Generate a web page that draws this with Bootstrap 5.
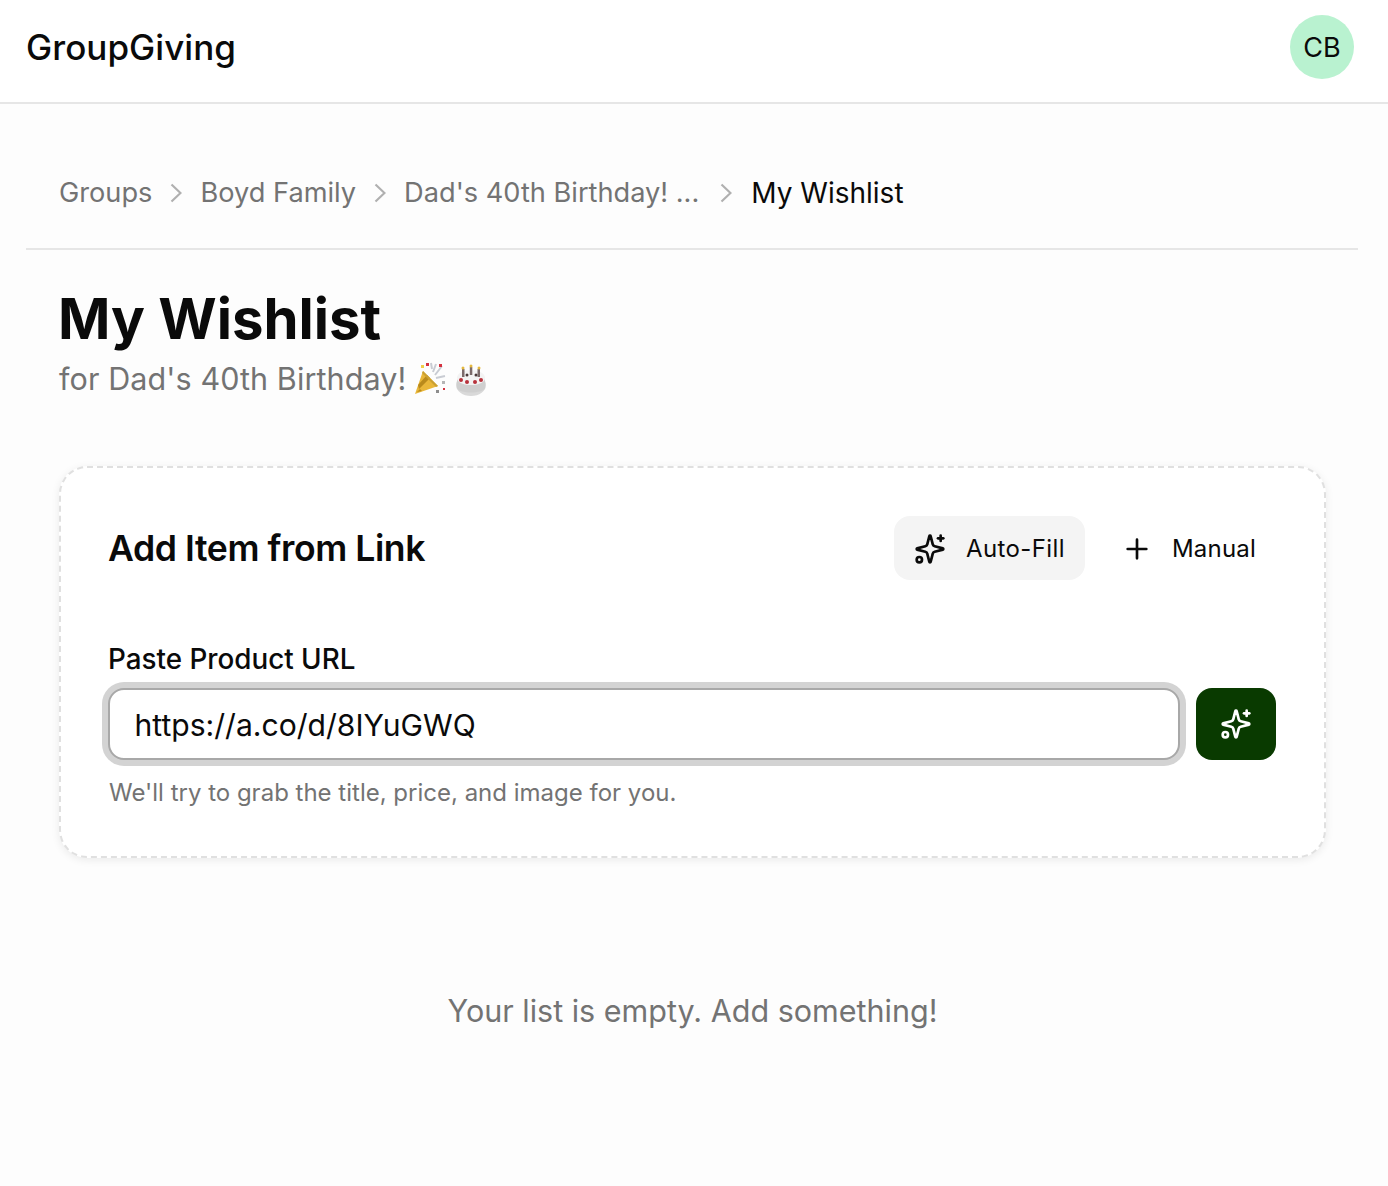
<!DOCTYPE html>
<html lang="en"><head><meta charset="utf-8"><title>GroupGiving</title>
<link href="https://cdn.jsdelivr.net/npm/bootstrap@5.3.0/dist/css/bootstrap.min.css" rel="stylesheet">
<style>
html,body{height:100%}
body{font-family:Inter,"Liberation Sans",sans-serif;background:#fdfdfd;color:#0a0a0a;-webkit-font-smoothing:antialiased}
.gg-top{height:104px;background:#fff;border-bottom:2px solid #e6e6e6;padding:0 34px 8px 26px}
.gg-logo{font-size:35px;font-weight:500;letter-spacing:.05px;line-height:1;color:#0a0a0a}
.gg-avatar{width:64px;height:64px;background:#b9f2d0;font-size:27px;line-height:1}
.gg-wrap{padding:0 30px 0 26px}
.gg-crumbs{height:146px;padding:69px 0 0 33px;border-bottom:2px solid #e6e6e6;font-size:27.2px;line-height:40px;color:#737373;gap:18px}
.gg-crumbs .gg-now{color:#0a0a0a;font-size:28px}
.gg-chev{width:12px;height:22px;margin-top:9px}
.gg-chev-last{margin-left:3px;margin-right:1px}
.gg-head{padding:37px 0 0 33px}
.gg-h1{font-size:56.3px;font-weight:700;line-height:64px;margin:0 0 0 -1px}
.gg-sub{font-size:30.5px;color:#737373;line-height:44px;margin:6px 0 0;letter-spacing:.1px}
.gg-emo{width:36px;height:36px;vertical-align:-7px}
.gg-emo1{margin-left:6px}
.gg-emo2{margin-left:5px}
.gg-panel{margin:65px 32px 0 33px;height:392px;border:2px dashed #e0e0e0;border-radius:28px;background:#fff;box-shadow:0 2px 8px rgba(0,0,0,.08);padding:48px 48px 0 48px}
.gg-h2{font-size:35.6px;font-weight:600;letter-spacing:-.42px;margin:0 0 0 -1px;padding-top:2px;line-height:62px}
.gg-btn{height:64px;border-radius:16px;border:0;background:transparent;color:#0a0a0a;font-size:24px;padding:2px 20px 0;gap:19px;letter-spacing:.2px}
.gg-btn-soft{background:#f4f4f4;gap:20px;letter-spacing:.4px}
.gg-spark{width:32px;height:32px;fill:none;stroke:currentColor;stroke-width:2;stroke-linecap:round;stroke-linejoin:round}
.gg-label{font-size:27.8px;font-weight:500;line-height:32px;margin:63px 0 13px -1px;display:block}
.gg-input{height:72px;border-radius:16px;border:2px solid #a8a8a8;box-shadow:0 0 0 6px #d3d3d3;background:#fff;font-size:30.1px;padding:2px 24px 0 24.500px;font-family:inherit;color:#0a0a0a;outline:0;margin-left:-1px}
.gg-go{width:80px;height:72px;border-radius:16px;background:#093a00;border:0;margin-left:16px;color:#fff}
.gg-hint{font-size:24px;color:#737373;line-height:32px;margin:17px 0 0}
.gg-empty{font-size:30.5px;color:#737373;text-align:center;margin:131px 0 0;line-height:44px;padding-left:1px}
</style></head><body>
<svg width="0" height="0" class="position-absolute"><defs>
<symbol id="spark" viewBox="0 0 24 24"><path d="M9.937 15.5A2 2 0 0 0 8.500 14.063l-6.135-1.582a.5.5 0 0 1 0-.962L8.500 9.936A2 2 0 0 0 9.937 8.500l1.582-6.135a.5.5 0 0 1 .963 0L14.063 8.500A2 2 0 0 0 15.500 9.937l6.135 1.581a.5.5 0 0 1 0 .964L15.500 14.063a2 2 0 0 0-1.437 1.437l-1.582 6.135a.5.5 0 0 1-.963 0z"/><path d="M20 2v4"/><path d="M22 4h-4"/><circle cx="4" cy="20" r="2"/></symbol>
</defs></svg>
<header class="gg-top d-flex align-items-center justify-content-between">
<div class="gg-logo">GroupGiving</div>
<div class="gg-avatar rounded-circle d-flex align-items-center justify-content-center">CB</div>
</header>
<div class="gg-wrap">
<nav class="gg-crumbs d-flex align-items-start" aria-label="breadcrumb">
<span>Groups</span>
<svg class="gg-chev" viewBox="0 0 12 22" fill="none" stroke="#b0b0b0" stroke-width="2.200"><path d="M1.500 2.500l9 8.500-9 8.500"/></svg>
<span>Boyd Family</span>
<svg class="gg-chev" viewBox="0 0 12 22" fill="none" stroke="#b0b0b0" stroke-width="2.200"><path d="M1.500 2.500l9 8.500-9 8.500"/></svg>
<span>Dad's 40th Birthday! ...</span>
<svg class="gg-chev gg-chev-last" viewBox="0 0 12 22" fill="none" stroke="#b0b0b0" stroke-width="2.200"><path d="M1.500 2.500l9 8.500-9 8.500"/></svg>
<span class="gg-now">My Wishlist</span>
</nav>
<div class="gg-head">
<h1 class="gg-h1">My Wishlist</h1>
<p class="gg-sub">for Dad's 40th Birthday!<svg class="gg-emo gg-emo1" viewBox="0 0 36 36"><path d="M3 33 11 10l15 15z" fill="#e9b73a"/><path d="M6 24l9-10 3 3-11 11zM5 31l3-3 2 2z" fill="#b98a1c"/><path d="M11 10l15 15-2 1L10 12z" fill="#caa032"/><path d="M19 2l1 6M24 3l-3 8M30 5l-7 9M33 15l-9 2" stroke="#c9ccd3" stroke-width="2"/><rect x="14" y="2" width="3" height="3" fill="#d5323f"/><rect x="27" y="3" width="3" height="3" fill="#d5323f"/><rect x="9" y="4" width="3" height="3" fill="#f0cf4a"/><rect x="30" y="20" width="3" height="3" fill="#b5b5b5"/><rect x="24" y="29" width="3" height="3" fill="#8d8d8d"/><rect x="31" y="27" width="2" height="2" fill="#d5323f"/></svg><svg class="gg-emo gg-emo2" viewBox="0 0 36 36"><ellipse cx="18" cy="24" rx="15" ry="11" fill="#d9d9d9"/><ellipse cx="18" cy="17" rx="14" ry="8" fill="#f3f3f3"/><path d="M4 18v9c2 6 26 6 28 0v-9c-2 8-26 8-28 0z" fill="#cfcfcf"/><rect x="9" y="8" width="2.500" height="8" fill="#7a6a6a"/><rect x="16.800" y="6" width="2.500" height="8" fill="#7a6a6a"/><rect x="24.500" y="8" width="2.500" height="8" fill="#7a6a6a"/><circle cx="10" cy="7" r="1.500" fill="#e5b93f"/><circle cx="18" cy="5" r="1.500" fill="#e5b93f"/><circle cx="26" cy="7" r="1.500" fill="#e5b93f"/><circle cx="8" cy="19" r="2" fill="#b8323c"/><circle cx="14" cy="21" r="2" fill="#b8323c"/><circle cx="22" cy="21" r="2" fill="#b8323c"/><circle cx="28" cy="19" r="2" fill="#b8323c"/><circle cx="14" cy="14" r="1.500" fill="#4a3a3a"/><circle cx="23" cy="14" r="1.500" fill="#4a3a3a"/></svg></p>
</div>
<section class="gg-panel">
<div class="d-flex justify-content-between align-items-center">
<h2 class="gg-h2">Add Item from Link</h2>
<div class="d-flex gap-3">
<button class="gg-btn gg-btn-soft d-flex align-items-center"><svg class="gg-spark"><use href="#spark"/></svg>Auto-Fill</button>
<button class="gg-btn d-flex align-items-center"><svg class="gg-spark" viewBox="0 0 24 24"><path d="M5 12h14M12 5v14"/></svg>Manual</button>
</div>
</div>
<label class="gg-label" for="gg-url">Paste Product URL</label>
<div class="d-flex">
<input id="gg-url" class="gg-input flex-grow-1" value="https://a.co/d/8IYuGWQ">
<button class="gg-go d-flex align-items-center justify-content-center" aria-label="Auto-fill"><svg class="gg-spark"><use href="#spark"/></svg></button>
</div>
<p class="gg-hint">We'll try to grab the title, price, and image for you.</p>
</section>
<p class="gg-empty">Your list is empty. Add something!</p>
</div>
<script src="https://cdn.jsdelivr.net/npm/bootstrap@5.3.0/dist/js/bootstrap.bundle.min.js"></script>
</body></html>
